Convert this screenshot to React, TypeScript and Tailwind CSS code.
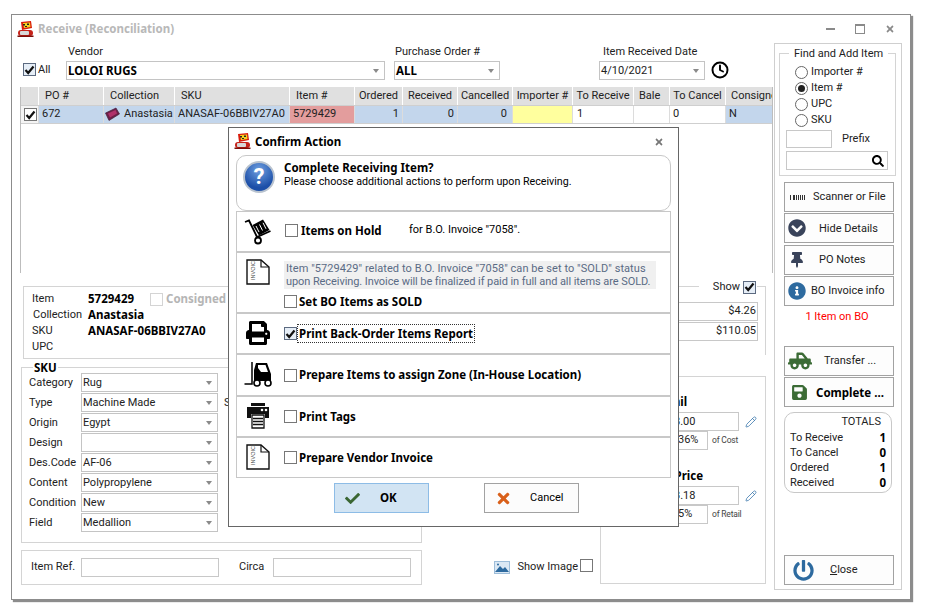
import { Clock, Pencil } from "lucide-react";
import {
  FaCheck,
  FaChevronCircleDown,
  FaInfoCircle,
  FaPowerOff,
  FaPrint,
  FaSave,
  FaSearch,
  FaThumbtack,
  FaTimes,
  FaTruckPickup,
} from "react-icons/fa";
import type { ReactNode } from "react";

// Tahoma Bold is wide, so bold labels use a wider family than body text
const strong = "font-['Noto_Sans',sans-serif] text-[11.5px] font-bold";

const columns = [
  { title: "", value: "", width: "w-[18px]", cell: "bg-[#f4f4f4]", head: "" },
  { title: "PO #", value: "672", width: "w-[65px]", cell: "bg-[#c3d6ec] pl-[3px]", head: "pl-[6px]" },
  { title: "Collection", value: "Anastasia", width: "w-[71px]", cell: "bg-[#c3d6ec] pl-[20px]", head: "pl-[6px]" },
  { title: "SKU", value: "ANASAF-06BBIV27A0", width: "w-[115px]", cell: "bg-[#c3d6ec] pl-[3px]", head: "pl-[6px]" },
  { title: "Item #", value: "5729429", width: "w-[65px]", cell: "bg-[#e39d9d] pl-[3px]", head: "pl-[6px]" },
  { title: "Ordered", value: "1", width: "w-[48px]", cell: "bg-[#c3d6ec] justify-end pr-[3px]", head: "justify-center" },
  { title: "Received", value: "0", width: "w-[55px]", cell: "bg-[#c3d6ec] justify-end pr-[3px]", head: "justify-center" },
  { title: "Cancelled", value: "0", width: "w-[55px]", cell: "bg-[#c3d6ec] justify-end pr-[5px]", head: "justify-center" },
  { title: "Importer #", value: "", width: "w-[60px]", cell: "bg-[#ffff9e]", head: "justify-center" },
  { title: "To Receive", value: "1", width: "w-[61px]", cell: "bg-white pl-[4px]", head: "justify-center" },
  { title: "Bale", value: "", width: "w-[36px]", cell: "bg-white", head: "pl-[5px]" },
  { title: "To Cancel", value: "0", width: "w-[56px]", cell: "bg-white pl-[3px]", head: "justify-center" },
  { title: "Consigned", value: "N", width: "w-[47px]", cell: "bg-[#c3d6ec] pl-[3px]", head: "pl-[5px]" },
];

const skuFields = [
  ["Category", "Rug"],
  ["Type", "Machine Made"],
  ["Origin", "Egypt"],
  ["Design", ""],
  ["Des.Code", "AF-06"],
  ["Content", "Polypropylene"],
  ["Condition", "New"],
  ["Field", "Medallion"],
];

const totals = [
  ["To Receive", "1"],
  ["To Cancel", "0"],
  ["Ordered", "1"],
  ["Received", "0"],
];

const Logo = () => (
  <svg width="17" height="17" viewBox="0 0 17 17" className="shrink-0">
    <path d="M4 1 L14 0 L15 7 L5 9 Z" fill="#d91c0c" />
    <path d="M6 2 L13 1.5 L13.5 6 L7 7 Z" fill="#f4d21f" />
    <path d="M6 3 h2 v1.5 h-2z M10 2.5 h2 v1.5 h-2z M8 5 h2 v1 h-2z" fill="#222" />
    <rect x="1" y="9" width="15" height="6" rx="3" fill="#c6231a" />
    <rect x="3" y="10" width="9" height="4" rx="1" fill="#d8d8d8" />
    <rect x="0.5" y="14.5" width="16" height="1.5" fill="#7b0d08" />
  </svg>
);

const Caret = () => (
  <span className="ml-auto mr-[5px] h-0 w-0 border-x-[3.5px] border-t-[4px] border-x-transparent border-t-[#8a8a8a]" />
);

const Combo = ({ value, className, bold }: { value: string; className: string; bold?: boolean }) => (
  <div className={`flex items-center border border-[#c4c4c4] bg-white pl-[1px] ${className}`}>
    <span className={bold ? `${strong} text-black` : "pt-[1px]"}>{value}</span>
    <Caret />
  </div>
);

const Check = ({ checked, dim, dark }: { checked?: boolean; dim?: boolean; dark?: boolean }) => (
  <span
    className={`flex h-[13px] w-[13px] shrink-0 items-center justify-center border ${
      dim ? "border-[#d4d4d4]" : dark ? "border-[#5c6a80]" : "border-[#777]"
    } ${checked && dark ? "bg-[#e6eef7]" : "bg-white"}`}
  >
    {checked && (
      <svg width="11" height="10" viewBox="0 0 11 10">
        <path d="M1.5 5 L4.2 8 L9.5 1.5" stroke="#111" strokeWidth="2.2" fill="none" />
      </svg>
    )}
  </span>
);

const Radio = ({ label, on }: { label: string; on?: boolean }) => (
  <div className="flex h-[16px] items-center gap-[3px]">
    <span className="flex h-[13px] w-[13px] items-center justify-center rounded-full border border-[#666] bg-white">
      {on && <span className="h-[7px] w-[7px] rounded-full bg-[#222]" />}
    </span>
    {label}
  </div>
);

const SideButton = ({ icon, label, className }: { icon: ReactNode; label: ReactNode; className: string }) => (
  <button className="flex h-[30px] w-[110px] items-center border border-[#a2a2a2] bg-[#fdfdfd]">
    <span className="flex w-[24px] shrink-0 items-center justify-center">{icon}</span>
    <span className={className}>{label}</span>
  </button>
);

const HandTruck = () => (
  <svg width="28" height="27" viewBox="0 0 28 27">
    <path d="M1 4 L5 2.5 L13 19 L26.5 13" fill="none" stroke="#000" strokeWidth="1.8" />
    <path d="M8.5 7 L19 1.5 L25.5 12 L15 17.5 Z" fill="#000" />
    <path d="M12 8 L15 14 M15.5 6.5 L18.5 12.5 M19 4.8 L22 10.8" stroke="#fff" strokeWidth="1" />
    <circle cx="14" cy="22.5" r="3" fill="#fff" stroke="#000" strokeWidth="1.8" />
  </svg>
);

const ForkliftIcon = () => (
  <svg width="28" height="26" viewBox="0 0 28 26">
    <path d="M8 1 V23 H0.5" fill="none" stroke="#000" strokeWidth="1.5" />
    <path d="M12 2 H23 L27 13 V20 H10 V9 Z" fill="#000" />
    <path d="M14 4 H21.5 L24 11 H17 L14 7 Z" fill="#fff" />
    <circle cx="13" cy="22" r="3" fill="#fff" stroke="#000" strokeWidth="1.6" />
    <circle cx="24" cy="22" r="3" fill="#fff" stroke="#000" strokeWidth="1.6" />
  </svg>
);

const InvoiceIcon = () => (
  <svg width="24" height="26" viewBox="0 0 24 26">
    <path d="M1 1 H15 L23 8 V25 H1 Z" fill="#fff" stroke="#111" strokeWidth="1.4" />
    <path d="M15 1 V8 H23" fill="none" stroke="#111" strokeWidth="1.2" />
    <text
      x="0"
      y="0"
      transform="translate(9 21) rotate(-90)"
      fontSize="5.5"
      fontFamily="Liberation Sans, sans-serif"
      fill="#555"
    >
      INVOICE
    </text>
  </svg>
);

const TagPrinter = () => (
  <svg width="24" height="26" viewBox="0 0 24 26">
    <path d="M5 0 H19 V3 H5 Z" fill="#111" />
    <path d="M1 4 H23 V15 H19 V11 H5 V15 H1 Z" fill="#111" />
    <circle cx="16" cy="7" r="1.3" fill="#fff" />
    <circle cx="20" cy="7" r="1.3" fill="#fff" />
    <path d="M6 12 H18 V25 H6 Z" fill="#fff" stroke="#111" strokeWidth="1.3" />
    <path d="M7 15.5 H17 M7 18.5 H17 M7 21.5 H17" stroke="#111" strokeWidth="1.6" />
  </svg>
);

const RugIcon = () => (
  <svg width="15" height="15" viewBox="0 0 15 15">
    <path d="M0.5 6 L11 1 L14.5 7 L4 13.5 Z" fill="#6d2148" stroke="#3b1430" strokeWidth="0.6" />
    <path d="M3 6.5 L10.5 3 L12 6.5 L5 10.5 Z" fill="#b0316a" />
  </svg>
);

const DialogRow = ({ icon, height, children }: { icon: ReactNode; height: string; children: ReactNode }) => (
  <div className={`flex items-start border-b-2 border-[#c8c8c8] last:border-b-0 ${height}`}>
    <div className="flex h-[38px] w-[47px] shrink-0 items-center justify-center pr-[5px]">{icon}</div>
    <div className="min-w-0 flex-1">{children}</div>
  </div>
);

const Dialog = () => (
  <div className="absolute left-[228px] top-[127px] h-[400px] w-[451px] border border-[#666] bg-white">
    <div className="flex h-[27px] items-center pl-[5px] pr-[14px]">
      <Logo />
      <span className={`ml-[4px] text-black ${strong}`}>Confirm Action</span>
      <FaTimes className="ml-auto text-[10px] text-[#777]" />
    </div>
    <div className="mx-[7px] flex h-[56px] gap-[9px] rounded-[10px] border border-[#c8c8c8] pl-[6px] pt-[5px]">
      <div className="flex h-[32px] w-[32px] items-center justify-center rounded-full border-2 border-[#b9c3cf] bg-[radial-gradient(circle_at_50%_25%,#6f9fe0,#1c4fa8_70%)] text-[22px] font-bold leading-none text-white">
        ?
      </div>
      <div className="leading-[14px]">
        <div className={`text-black ${strong}`}>Complete Receiving Item?</div>
        <div className="text-[10.7px] text-black">Please choose additional actions to perform upon Receiving.</div>
      </div>
    </div>
    <div className="mx-[7px] border border-[#c8c8c8]">
      <DialogRow height="h-[41px]" icon={<HandTruck />}>
        <div className="flex h-[37px] items-center pl-[1px] text-black">
          <Check />
          <span className={`ml-[3px] w-[108px] ${strong}`}>Items on Hold</span>
          for B.O. Invoice "7058".
        </div>
      </DialogRow>
      <DialogRow height="h-[61px]" icon={<InvoiceIcon />}>
        <div className="mt-[8px] w-[372px] whitespace-nowrap bg-[#f0f0f0] py-[1px] pl-[2px] leading-[13px] text-[#5a6b85]">
          <div className="tracking-[0.07px]">Item "5729429" related to B.O. Invoice "7058" can be set to "SOLD" status</div>
          <div className="tracking-[-0.08px]">upon Receiving. Invoice will be finalized if paid in full and all items are SOLD.</div>
        </div>
        <div className={`mt-[4px] flex items-center gap-[2px] text-black ${strong}`}>
          <Check />
          Set BO Items as SOLD
        </div>
      </DialogRow>
      <DialogRow height="h-[41px]" icon={<FaPrint className="text-[24px] text-black" />}>
        <div className={`flex h-[39px] items-center text-black ${strong}`}>
          <Check checked dark />
          <span className="border border-dotted border-[#333] px-[1px]">Print Back-Order Items Report</span>
        </div>
      </DialogRow>
      <DialogRow height="h-[42px]" icon={<ForkliftIcon />}>
        <div className={`flex h-[40px] items-center gap-[2px] text-black ${strong}`}>
          <Check />
          Prepare Items to assign Zone (In-House Location)
        </div>
      </DialogRow>
      <DialogRow height="h-[41px]" icon={<TagPrinter />}>
        <div className={`flex h-[39px] items-center gap-[2px] text-black ${strong}`}>
          <Check />
          Print Tags
        </div>
      </DialogRow>
      <DialogRow height="h-[39px]" icon={<InvoiceIcon />}>
        <div className={`flex h-[39px] items-center gap-[2px] text-black ${strong}`}>
          <Check />
          Prepare Vendor Invoice
        </div>
      </DialogRow>
    </div>
    <div className="mt-[5px] flex pl-[105px]">
      <button className={`flex h-[30px] w-[95px] items-center border border-[#8dbce6] bg-[#d2e4f3] pl-[10px] text-black ${strong}`}>
        <FaCheck className="text-[15px] text-[#3a6633]" />
        <span className="ml-[20px]">OK</span>
      </button>
      <button className="ml-[55px] flex h-[30px] w-[95px] items-center border border-[#a2a2a2] bg-[#fcfcfc] pl-[10px] text-black">
        <FaTimes className="text-[17px] text-[#d9601a]" />
        <span className="ml-[18px]">Cancel</span>
      </button>
    </div>
  </div>
);

const Sidebar = () => (
  <div className="flex h-[547px] w-[128px] flex-col border border-[#cfcfcf] pl-[9px]">
    <div className="relative -ml-[5px] mt-[9px] h-[123px] w-[117px] border border-[#d4d4d4] pl-[15px] pt-[10px]">
      <span className="absolute -top-[8px] left-[9px] bg-white px-[5px] text-[#222]">Find and Add Item</span>
      <Radio label="Importer #" />
      <Radio on label="Item #" />
      <Radio label="UPC" />
      <Radio label="SKU" />
      <div className="-ml-[9px] mt-[2px] flex items-center">
        <div className="h-[18px] w-[46px] border border-[#c8c8c8]" />
        <span className="ml-[10px]">Prefix</span>
      </div>
      <div className="-ml-[9px] mt-[3px] flex h-[19px] w-[102px] items-center justify-end border border-[#c8c8c8] pr-[3px]">
        <FaSearch className="text-[12px] text-black" />
      </div>
    </div>
    <div className="mt-[6px] flex flex-col gap-[1.4px]">
      <SideButton
        icon={
          <svg width="15" height="5" viewBox="0 0 15 5">
            <path d="M0 0h1v5H0zM3 0h2v5H3zM6 0h1v5H6zM8 0h1v5H8zM10 0h1v5h-1zM12 0h1v5h-1zM14 0h1v5h-1z" fill="#333" />
          </svg>
        }
        label="Scanner or File"
        className="ml-[4px] pt-[1px]"
      />
      <SideButton
        icon={<FaChevronCircleDown className="text-[18px] text-[#39435a]" />}
        label="Hide Details"
        className="ml-[10px] pt-[1px]"
      />
      <SideButton
        icon={<FaThumbtack className="text-[16px] text-[#39435a]" />}
        label="PO Notes"
        className="ml-[10px] pt-[1px]"
      />
      <SideButton
        icon={<FaInfoCircle className="text-[18px] text-[#2d6a9f]" />}
        label="BO Invoice info"
        className="ml-[2px] pt-[1px]"
      />
    </div>
    <div className="mt-[2px] h-[17px] w-[110px] pr-[4px] text-center leading-[17px] text-[#f00]">1 Item on BO</div>
    <div className="mt-[21px] flex flex-col gap-[1px]">
      <SideButton
        icon={<FaTruckPickup className="ml-[5px] shrink-0 text-[24px] text-[#3b6b35]" />}
        label="Transfer ..."
        className="ml-[15px] pt-[1px]"
      />
      <SideButton
        icon={<FaSave className="ml-[5px] shrink-0 text-[17px] text-[#3b6b35]" />}
        label="Complete ..."
        className={`ml-[7px] text-black ${strong}`}
      />
    </div>
    <div className="mt-[5px] h-[81px] w-[108px] rounded-[10px] border border-[#c8c8c8] px-[5px] pt-[1px] leading-[15px]">
      <div className="mb-[1px] pr-[5px] text-right">TOTALS</div>
      {totals.map(([label, value]) => (
        <div key={label} className="flex justify-between">
          <span>{label}</span>
          <span className={`text-black ${strong}`}>{value}</span>
        </div>
      ))}
    </div>
    <div className="mt-[62px]">
      <SideButton
        icon={<FaPowerOff className="ml-[12px] shrink-0 text-[21px] text-[#2d6a9f]" />}
        label={
          <>
            <span className="underline">C</span>lose
          </>
        }
        className="ml-[21px]"
      />
    </div>
  </div>
);

const GridTable = () => (
  <div className="ml-[-1px] mt-[7px] h-[186px] w-[753px] overflow-hidden border-l border-r border-[#bdbdbd]">
    <div className="flex h-[18px] bg-[#e0e0e0]">
      {columns.map((col) => (
        <div
          key={col.title || "sel"}
          className={`flex h-full shrink-0 items-center overflow-hidden whitespace-nowrap border-r border-white ${col.width} ${col.head}`}
        >
          {col.title}
        </div>
      ))}
    </div>
    <div className="flex h-[19px] border-b border-t border-[#cfcfcf]">
      {columns.map((col, i) => (
        <div
          key={col.title || "sel"}
          className={`relative flex h-full shrink-0 items-center whitespace-nowrap border-r border-[#dcdcdc] ${col.width} ${col.cell}`}
        >
          {i === 0 && (
            <span className="ml-[3px]">
              <Check checked />
            </span>
          )}
          {col.title === "Collection" && (
            <span className="absolute left-[1px] top-[1px]">
              <RugIcon />
            </span>
          )}
          {col.value}
        </div>
      ))}
    </div>
  </div>
);

const LowerLeft = () => (
  <div className="w-[401px] shrink-0">
    <div className="ml-[2px] h-[73px] border border-[#d4d4d4] pl-[8px] pt-[4px] leading-[16px]">
      <div className="flex">
        <span className="w-[56px]">Item</span>
        <span className={`w-[62px] text-black ${strong}`}>5729429</span>
        <span className={`flex items-center gap-[3px] text-[#b5b5b5] ${strong}`}>
          <Check dim />
          Consigned
        </span>
      </div>
      <div className="flex">
        <span className="w-[56px] pl-[1px]">Collection</span>
        <span className={`text-black ${strong}`}>Anastasia</span>
      </div>
      <div className="flex">
        <span className="w-[56px]">SKU</span>
        <span className={`text-black ${strong}`}>ANASAF-06BBIV27A0</span>
      </div>
      <div>UPC</div>
    </div>
    <div className="relative mt-[8px] h-[176px] border border-[#d4d4d4] pl-[7px] pt-[5px]">
      <span className={`absolute -top-[7px] left-[11px] bg-white px-[1px] leading-[14px] text-black ${strong}`}>SKU</span>
      <span className="absolute left-[202px] top-[27px]">S</span>
      <div className="flex flex-col gap-[1px]">
        {skuFields.map(([label, value]) => (
          <div key={label} className="flex h-[19px] items-center">
            <span className="w-[52px] pt-[2px]">{label}</span>
            <Combo value={value} className="h-[19px] w-[137px]" />
          </div>
        ))}
      </div>
    </div>
    <div className="mt-[7px] flex h-[35px] items-center border border-[#d4d4d4] pl-[9px]">
      <span className="w-[50px]">Item Ref.</span>
      <div className="h-[19px] w-[138px] border border-[#c8c8c8]" />
      <span className="ml-[20px] w-[34px]">Circa</span>
      <div className="h-[19px] w-[138px] border border-[#c8c8c8]" />
    </div>
  </div>
);

const LowerMiddle = () => (
  <div className="flex w-[178px] shrink-0 items-end justify-end pb-[10px] pr-[7px]">
    <svg width="16" height="13" viewBox="0 0 16 13" className="mb-[1px] mr-[8px]">
      <rect x="0.5" y="0.5" width="15" height="12" fill="#dbe8f4" stroke="#9dbdd9" />
      <path d="M1 11 L6 5 L9 8 L11 6 L15 11 Z" fill="#2d6a9f" />
      <circle cx="4" cy="3.5" r="1" fill="#2d6a9f" />
    </svg>
    <span className="mr-[2px]">Show Image</span>
    <span className="mb-[3px]">
      <Check />
    </span>
  </div>
);

const PriceBox = ({
  title,
  titleClass,
  value,
  percent,
  note,
}: {
  title: string;
  titleClass: string;
  value: string;
  percent: string;
  note: string;
}) => (
  <div>
    <div className={`h-[14px] leading-[14px] text-black ${titleClass} ${strong}`}>{title}</div>
    <div className="mt-[3px] flex items-center">
      <div className="flex h-[19px] w-[121px] items-center border border-[#c8c8c8] pl-[55px] leading-none">{value}</div>
      <Pencil size={12} strokeWidth={1.6} className="ml-[6px] text-[#3c78ad]" />
    </div>
    <div className="flex items-center">
      <div className="flex h-[19px] w-[90px] items-center border border-[#c8c8c8] pl-[59px]">{percent}</div>
      <span className="ml-[4px] text-[8.5px] tracking-[-0.2px] text-[#444]">{note}</span>
    </div>
  </div>
);

const LowerRight = () => (
  <div className="w-[166px] shrink-0">
    <div className="relative h-[69px] border-r border-t border-[#d4d4d4] pt-[15px]">
      <span className="absolute -top-[8px] right-[8px] flex items-center gap-[3px] bg-white pl-[14px] pr-[1px]">
        Show
        <Check checked dark />
      </span>
      <div className="ml-auto mr-[7px] flex h-[19px] w-[120px] items-center justify-end border border-[#c8c8c8] pr-[1px]">
        $4.26
      </div>
      <div className="ml-auto mr-[7px] mt-[1px] flex h-[19px] w-[120px] items-center justify-end border border-[#c8c8c8] pr-[1px]">
        $110.05
      </div>
    </div>
    <div className="mt-[21px] flex h-[208px] flex-col gap-[19px] border border-[#d4d4d4] pl-[17px] pt-[18px]">
      <PriceBox title="Retail" titleClass="pl-[36px]" value="8.00" percent="36%" note="of Cost" />
      <PriceBox title="Sale Price" titleClass="pl-[30px]" value="3.18" percent="5%" note="of Retail" />
    </div>
  </div>
);

export default function App() {
  return (
    <div className="relative h-[610px] w-[925px] overflow-hidden bg-white pl-[11px] pt-[14px] font-['Roboto',sans-serif] text-[11px] text-[#222]">
      <div className="h-[586px] w-[900px] border border-[#8c8c8c] shadow-[2px_2px_1px_#8c8c8c]">
        <div className="flex h-[28px] items-center pl-[5px] pr-[15px]">
          <Logo />
          <span className="ml-[4px] font-['Noto_Sans',sans-serif] text-[11.5px] font-bold text-[#b8b8b8]">
            Receive (Reconciliation)
          </span>
          <div className="ml-auto flex items-center gap-[20px] text-[#8a8a8a]">
            <span className="h-[1.5px] w-[9px] bg-[#8a8a8a]" />
            <span className="h-[10px] w-[10px] border border-t-2 border-[#8a8a8a]" />
            <FaTimes className="text-[10px]" />
          </div>
        </div>
        <div className="flex">
          <div className="ml-[9px] w-[753px] shrink-0">
            <div className="flex h-[37px] items-end">
              <div className="mb-[1px] ml-[2px] flex w-[43px] items-center gap-[2px] pb-[1px]">
                <Check checked dark />
                All
              </div>
              <div className="w-[328px]">
                <div className="h-[18px] pl-[2px] leading-[18px]">Vendor</div>
                <Combo bold value="LOLOI RUGS" className="h-[19px] w-[319px]" />
              </div>
              <div className="w-[205px]">
                <div className="h-[18px] pl-[1px] leading-[18px]">Purchase Order #</div>
                <Combo bold value="ALL" className="h-[19px] w-[106px]" />
              </div>
              <div className="w-[112px]">
                <div className="h-[18px] pl-[4px] leading-[18px]">Item Received Date</div>
                <Combo value="4/10/2021" className="h-[19px] w-[106px]" />
              </div>
              <Clock size={18} strokeWidth={2.6} className="mb-[1px] text-black" />
            </div>
            <GridTable />
            <div className="mt-[13px] flex">
              <LowerLeft />
              <LowerMiddle />
              <LowerRight />
            </div>
          </div>
          <Sidebar />
        </div>
      </div>
      <Dialog />
    </div>
  );
}
